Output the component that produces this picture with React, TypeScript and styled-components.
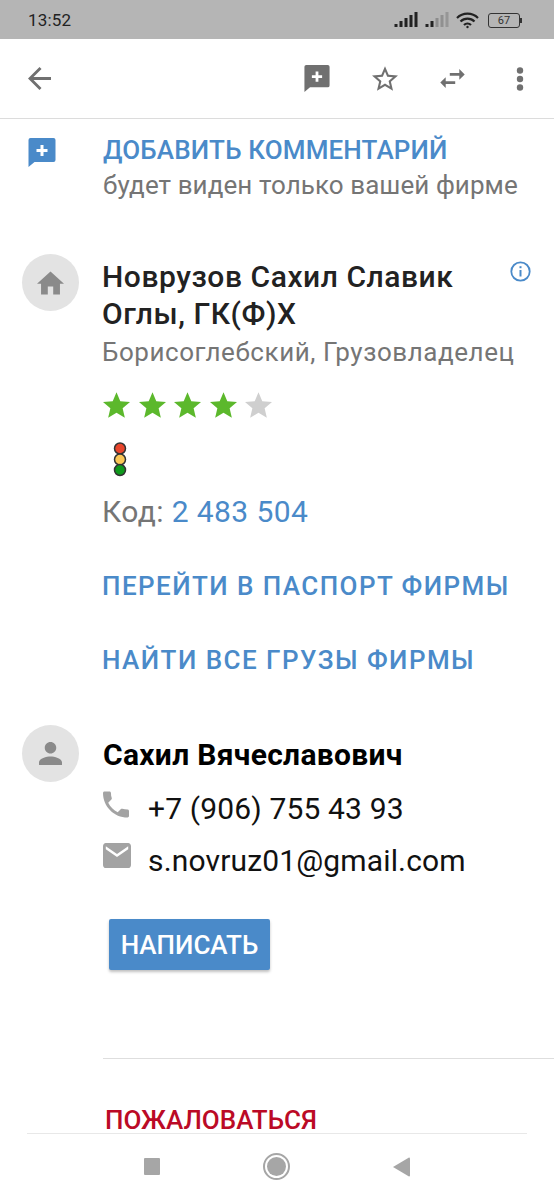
import React from "react";
import styled, { createGlobalStyle } from "styled-components";

const GlobalStyle = createGlobalStyle`
  html, body {
    margin: 0;
    padding: 0;
    background: #fff;
  }
  * {
    box-sizing: border-box;
  }
`;

const Screen = styled.div`
  width: 554px;
  height: 1200px;
  display: flex;
  flex-direction: column;
  overflow: hidden;
  background: #fff;
  font-family: Roboto, "Liberation Sans", sans-serif;
`;

// --- status bar ---

const StatusBar = styled.div`
  height: 39px;
  flex: none;
  display: flex;
  align-items: center;
  justify-content: space-between;
  padding: 10px 32px 9px 28px;
  background: #b5b5b5;
`;

const Clock = styled.span`
  font-size: 17px;
  font-weight: 400;
  letter-spacing: 0.2px;
  color: #222;
`;

const StatusIcons = styled.div`
  display: flex;
  align-items: center;
  gap: 7px;
`;

const BatteryBox = styled.div`
  width: 32px;
  height: 15px;
  border: 1.5px solid #333;
  border-radius: 3px;
  display: flex;
  align-items: center;
  justify-content: center;
  font-size: 11px;
  line-height: 1;
  color: #333;
  margin-left: 2px;
`;

const BatteryTip = styled.div`
  width: 2px;
  height: 5px;
  background: #333;
  margin-left: -7px;
`;

// --- toolbar ---

const Toolbar = styled.div`
  height: 80px;
  flex: none;
  display: flex;
  align-items: center;
  padding: 0 30px 0 28px;
  border-bottom: 1px solid #dcdcdc;
`;

const ToolbarSpacer = styled.div`
  flex: 1;
`;

const ToolbarActions = styled.div`
  display: flex;
  align-items: center;
  gap: 42px;
`;

const MoreButton = styled.div`
  margin-left: 9px;
`;

const Icon = styled.svg<{ $color?: string }>`
  display: block;
  flex: none;
  fill: ${({ $color }) => $color ?? "#707070"};
`;

// --- content ---

const Content = styled.div`
  flex: 1;
  min-height: 0;
`;

const CommentRow = styled.div`
  display: flex;
  padding: 19px 0 0 28px;
`;

const CommentText = styled.div`
  margin-left: 47px;
  margin-top: -3px;
`;

const LinkTitle = styled.div`
  font-size: 26px;
  line-height: 30px;
  font-weight: 500;
  letter-spacing: 0.15px;
  color: #4a8ac9;
`;

const Hint = styled.div`
  font-size: 26px;
  line-height: 32px;
  letter-spacing: 0.07px;
  color: #757575;
  margin-top: 4px;
`;

const Section = styled.div<{ $top: number }>`
  display: flex;
  padding: ${({ $top }) => $top}px 0 0 22px;
`;

const Avatar = styled.div`
  width: 57px;
  height: 57px;
  flex: none;
  border-radius: 50%;
  background: #e3e3e3;
  display: flex;
  align-items: center;
  justify-content: center;
`;

const SectionBody = styled.div`
  margin-left: 23px;
  flex: 1;
  min-width: 0;
  display: flex;
  flex-direction: column;
  align-items: flex-start;
`;

const FirmHeader = styled.div`
  position: relative;
  align-self: stretch;
`;

const InfoIcon = styled.svg`
  position: absolute;
  top: 7px;
  right: 23px;
  fill: none;
  stroke: #4a8ac9;
`;

const FirmName = styled.div`
  font-size: 30px;
  line-height: 37px;
  font-weight: 500;
  letter-spacing: 0.55px;
  color: #222;
  margin-top: 4px;
`;

const FirmMeta = styled.div`
  font-size: 26px;
  line-height: 32px;
  letter-spacing: 0.55px;
  color: #757575;
  margin-top: 4px;
`;

const Stars = styled.div`
  display: flex;
  gap: 8.5px;
  margin: 24px 0 0 1px;
`;

const TrafficLight = styled.svg`
  display: block;
  margin: 24px 0 0 11px;
`;

const CodeRow = styled.div`
  font-size: 30px;
  line-height: 36px;
  letter-spacing: 0.4px;
  color: #757575;
  margin-top: 17px;
`;

const CodeValue = styled.span`
  color: #4a8ac9;
`;

const FirmLink = styled.div<{ $top: number }>`
  font-size: 26px;
  line-height: 30px;
  font-weight: 500;
  letter-spacing: 1.45px;
  color: #4a8ac9;
  margin-top: ${({ $top }) => $top}px;
`;

const PersonName = styled.div`
  font-size: 30px;
  line-height: 34px;
  font-weight: 700;
  letter-spacing: 0.3px;
  color: #000;
  margin: 13px 0 0 1px;
`;

const ContactRow = styled.div<{ $top: number }>`
  display: flex;
  align-items: flex-start;
  margin: ${({ $top }) => $top}px 0 0 1px;
`;

const ContactIconSlot = styled.div`
  width: 45px;
  flex: none;
`;

const ContactValue = styled.div`
  font-size: 30px;
  line-height: 36px;
  letter-spacing: 0.15px;
  color: #111;
`;

const WriteButton = styled.button`
  margin: 40px 0 0 7px;
  width: 161px;
  height: 51px;
  padding: 0;
  border: none;
  border-radius: 2px;
  background: #4a8ac9;
  box-shadow: 0 2px 3px rgba(0, 0, 0, 0.25);
  color: #fff;
  font-family: inherit;
  font-size: 26px;
  font-weight: 500;
`;

const Divider = styled.div`
  margin: 88px 0 0 103px;
  height: 1px;
  background: #dedede;
`;

const ComplainLink = styled.div`
  margin: 48px 0 0 105px;
  font-size: 26px;
  line-height: 26px;
  font-weight: 500;
  color: #bb0a26;
`;

// --- navigation bar ---

const NavBar = styled.div`
  height: 67px;
  flex: none;
  margin: 0 27px;
  border-top: 1px solid #e8e8e8;
  display: flex;
  align-items: center;
  justify-content: center;
  gap: 103px;
  padding-bottom: 1px;
`;

const NavSquare = styled.div`
  width: 16px;
  height: 17px;
  background: #a6a6a6;
  border-radius: 1px;
`;

const NavCircle = styled.div`
  width: 27px;
  height: 27px;
  border-radius: 50%;
  border: 2px solid #a6a6a6;
  padding: 2px;
  background: #a6a6a6;
  background-clip: content-box;
`;

const NavTriangle = styled.svg`
  display: block;
  fill: #a6a6a6;
`;

const STAR_PATH =
  "M12 17.27L18.18 21l-1.64-7.03L22 9.24l-7.19-.61L12 2 9.19 8.63 2 9.24l5.46 4.73L5.82 21z";

const CommentAddIcon = ({ color, width, height }: { color: string; width: number; height: number }) => (
  <Icon $color={color} width={width} height={height} viewBox="0 0 27 29">
    <path d="M2 0h23a2 2 0 0 1 2 2v20a2 2 0 0 1-2 2H6l-6 5V2a2 2 0 0 1 2-2z" />
    <path fill="#fff" d="M12 7h3v4h4v3h-4v4h-3v-4H8v-3h4z" />
  </Icon>
);

const SignalBars = ({ dim }: { dim: boolean }) => (
  <svg width="24" height="16" viewBox="0 0 23 16">
    <rect x="0" y="12" width="3" height="3" fill="#222" />
    <rect x="5" y="9" width="3" height="6" fill="#222" />
    <rect x="10" y="6" width="3" height="9" fill={dim ? "#8c8c8c" : "#222"} />
    <rect x="15" y="3" width="3" height="12" fill={dim ? "#909090" : "#222"} />
    <rect x="20" y="0" width="3" height="15" fill={dim ? "#969696" : "#222"} />
  </svg>
);

const WifiIcon = () => (
  <svg width="23" height="17" viewBox="0 0 23 17" fill="none" stroke="#222" strokeWidth="2.2">
    <path d="M1 6a15 15 0 0 1 21 0" />
    <path d="M4.5 9.5a10 10 0 0 1 14 0" />
    <path d="M8 13a5 5 0 0 1 7 0" />
    <circle cx="11.5" cy="15" r="1.2" fill="#222" stroke="none" />
  </svg>
);

export default function App() {
  return (
    <Screen>
      <GlobalStyle />
      <StatusBar>
        <Clock>13:52</Clock>
        <StatusIcons>
          <SignalBars dim={false} />
          <SignalBars dim />
          <WifiIcon />
          <BatteryBox>67</BatteryBox>
          <BatteryTip />
        </StatusIcons>
      </StatusBar>

      <Toolbar>
        <Icon width="23" height="23" viewBox="4 4 16 16">
          <path d="M20 11H7.83l5.59-5.59L12 4l-8 8 8 8 1.41-1.41L7.83 13H20v-2z" />
        </Icon>
        <ToolbarSpacer />
        <ToolbarActions>
          <CommentAddIcon color="#707070" width={26} height={27} />
          <Icon width="26" height="25" viewBox="2 2 20 19">
            <path d="M22 9.24l-7.19-.62L12 2 9.19 8.63 2 9.24l5.46 4.73L5.82 21 12 17.27 18.18 21l-1.63-7.03L22 9.24zM12 15.4l-3.76 2.27 1-4.28-3.32-2.88 4.38-.38L12 6.1l1.71 4.04 4.38.38-3.32 2.88 1 4.28L12 15.4z" />
          </Icon>
          <Icon width="25" height="19" viewBox="3 5 18 14">
            <path d="M6.99 11L3 15l3.99 4v-3H14v-2H6.99v-3zM21 9l-3.99-4v3H10v2h7.01v3L21 9z" />
          </Icon>
          <MoreButton>
            <Icon width="8" height="24" viewBox="0 0 8 24">
              <circle cx="4" cy="3.5" r="3.2" />
              <circle cx="4" cy="12" r="3.2" />
              <circle cx="4" cy="20.5" r="3.2" />
            </Icon>
          </MoreButton>
        </ToolbarActions>
      </Toolbar>

      <Content>
        <CommentRow>
          <CommentAddIcon color="#4a8ac9" width={28} height={29} />
          <CommentText>
            <LinkTitle>ДОБАВИТЬ КОММЕНТАРИЙ</LinkTitle>
            <Hint>будет виден только вашей фирме</Hint>
          </CommentText>
        </CommentRow>

        <Section $top={53}>
          <Avatar>
            <Icon $color="#8a8a8a" width="27" height="24" viewBox="2 3 20 17">
              <path d="M10 20v-6h4v6h5v-8h3L12 3 2 12h3v8z" />
            </Icon>
          </Avatar>
          <SectionBody>
            <FirmHeader>
              <FirmName>
                Новрузов Сахил Славик
                <br />
                Оглы, ГК(Ф)Х
              </FirmName>
              <InfoIcon width="21" height="21" viewBox="0 0 21 21">
                <circle cx="10.5" cy="10.5" r="9.2" strokeWidth="1.8" />
                <path d="M10.5 9v6.5" strokeWidth="2" />
                <path d="M10.5 5.2v2" strokeWidth="2" />
              </InfoIcon>
            </FirmHeader>
            <FirmMeta>Борисоглебский, Грузовладелец</FirmMeta>
            <Stars>
              {[0, 1, 2, 3, 4].map((i) => (
                <Icon
                  key={i}
                  $color={i < 4 ? "#5cb82c" : "#cfcfcf"}
                  width="27"
                  height="26"
                  viewBox="2 2 20 19"
                >
                  <path d={STAR_PATH} />
                </Icon>
              ))}
            </Stars>
            <TrafficLight width="14" height="35" viewBox="0 0 13 35">
              <circle cx="6.5" cy="6.5" r="5.5" fill="#e8452c" stroke="#333" strokeWidth="1.5" />
              <circle cx="6.5" cy="17.5" r="5.5" fill="#fbc756" stroke="#333" strokeWidth="1.5" />
              <circle cx="6.5" cy="28" r="5.5" fill="#0f9a1c" stroke="#333" strokeWidth="1.5" />
            </TrafficLight>
            <CodeRow>
              Код: <CodeValue>2 483 504</CodeValue>
            </CodeRow>
            <FirmLink $top={41}>ПЕРЕЙТИ В ПАСПОРТ ФИРМЫ</FirmLink>
            <FirmLink $top={44}>НАЙТИ ВСЕ ГРУЗЫ ФИРМЫ</FirmLink>
          </SectionBody>
        </Section>

        <Section $top={50}>
          <Avatar>
            <Icon $color="#8a8a8a" width="23" height="23" viewBox="4 4 16 16">
              <path d="M12 12c2.21 0 4-1.79 4-4s-1.79-4-4-4-4 1.79-4 4 1.79 4 4 4zm0 2c-2.67 0-8 1.34-8 4v2h16v-2c0-2.66-5.33-4-8-4z" />
            </Icon>
          </Avatar>
          <SectionBody>
            <PersonName>Сахил Вячеславович</PersonName>
            <ContactRow $top={19}>
              <ContactIconSlot>
                <Icon $color="#a3a3a3" width="26" height="27" viewBox="3 3 18 18">
                  <path d="M6.62 10.79c1.44 2.83 3.76 5.14 6.59 6.59l2.2-2.2c.27-.27.67-.36 1.02-.24 1.12.37 2.33.57 3.57.57.55 0 1 .45 1 1V20c0 .55-.45 1-1 1-9.39 0-17-7.61-17-17 0-.55.45-1 1-1h3.5c.55 0 1 .45 1 1 0 1.25.2 2.45.57 3.57.11.35.03.74-.25 1.02l-2.2 2.2z" />
                </Icon>
              </ContactIconSlot>
              <ContactValue>+7 (906) 755 43 93</ContactValue>
            </ContactRow>
            <ContactRow $top={16}>
              <ContactIconSlot>
                <Icon $color="#a3a3a3" width="28" height="25" viewBox="2 4 20 16" preserveAspectRatio="none">
                  <path d="M20 4H4c-1.1 0-1.99.9-1.99 2L2 18c0 1.1.9 2 2 2h16c1.1 0 2-.9 2-2V6c0-1.1-.9-2-2-2zm0 4l-8 5-8-5V6l8 5 8-5v2z" />
                </Icon>
              </ContactIconSlot>
              <ContactValue>s.novruz01@gmail.com</ContactValue>
            </ContactRow>
            <WriteButton>НАПИСАТЬ</WriteButton>
          </SectionBody>
        </Section>

        <Divider />
        <ComplainLink>ПОЖАЛОВАТЬСЯ</ComplainLink>
      </Content>

      <NavBar>
        <NavSquare />
        <NavCircle />
        <NavTriangle width="17" height="20" viewBox="0 0 17 20">
          <path d="M16 0.5a1 1 0 0 1 1 1v17a1 1 0 0 1-1 1L0 10z" />
        </NavTriangle>
      </NavBar>
    </Screen>
  );
}
